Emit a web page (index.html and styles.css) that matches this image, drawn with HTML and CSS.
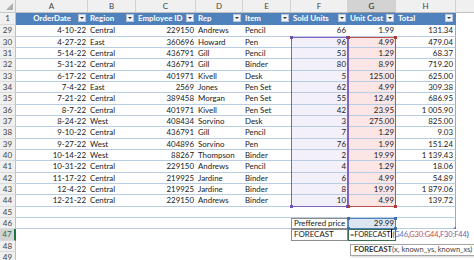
FILE: index.html
```html
<!DOCTYPE html>
<html>
<head>
<meta charset="utf-8">
<link rel="stylesheet" href="styles.css">
</head>
<body>
<div class="wrap">
  <div class="sheet">
    <div class="r">
      <div class="corner"><span class="tri"></span></div>
      <div class="colh">A</div><div class="colh">B</div><div class="colh">C</div><div class="colh">D</div>
      <div class="colh">E</div><div class="colh">F</div><div class="colh act">G</div><div class="colh">H</div><div class="colh last"></div>
    </div>
    <div class="r">
      <div class="rowh">1</div>
      <div class="th thr"><span>OrderDate</span><span class="fb"><i></i></span></div>
      <div class="th"><span>Region</span><span class="fb"><i></i></span></div>
      <div class="th"><span>Employee ID</span><span class="fb"><i></i></span></div>
      <div class="th"><span>Rep</span><span class="fb"><i></i></span></div>
      <div class="th"><span>Item</span><span class="fb"><i></i></span></div>
      <div class="th"><span>Sold Units</span><span class="fb"><i></i></span></div>
      <div class="th"><span>Unit Cost</span><span class="fb"><i></i></span></div>
      <div class="th thh"><span>Total</span><span class="fb"><i></i></span></div>
      <div class="c"></div>
    </div>
    <div class="r"><div class="rowh">29</div><div class="c t n">4-10-22</div><div class="c t">Central</div><div class="c t n">229150</div><div class="c t">Andrews</div><div class="c t">Pencil</div><div class="c t n">66</div><div class="c t n">1.99</div><div class="c t n h">131.34</div><div class="c"></div></div>
    <div class="r"><div class="rowh">30</div><div class="c t n">4-27-22</div><div class="c t">East</div><div class="c t n">360696</div><div class="c t">Howard</div><div class="c t">Pen</div><div class="c t n pf">96</div><div class="c t n pg">4.99</div><div class="c t n h">479.04</div><div class="c"></div></div>
    <div class="r"><div class="rowh">31</div><div class="c t n">5-14-22</div><div class="c t">Central</div><div class="c t n">436791</div><div class="c t">Gill</div><div class="c t">Pencil</div><div class="c t n pf">53</div><div class="c t n pg">1.29</div><div class="c t n h">68.37</div><div class="c"></div></div>
    <div class="r"><div class="rowh">32</div><div class="c t n">5-31-22</div><div class="c t">Central</div><div class="c t n">436791</div><div class="c t">Gill</div><div class="c t">Binder</div><div class="c t n pf">80</div><div class="c t n pg">8.99</div><div class="c t n h">719.20</div><div class="c"></div></div>
    <div class="r"><div class="rowh">33</div><div class="c t n">6-17-22</div><div class="c t">Central</div><div class="c t n">401971</div><div class="c t">Kivell</div><div class="c t">Desk</div><div class="c t n pf">5</div><div class="c t n pg">125.00</div><div class="c t n h">625.00</div><div class="c"></div></div>
    <div class="r"><div class="rowh">34</div><div class="c t n">7-4-22</div><div class="c t">East</div><div class="c t n">2569</div><div class="c t">Jones</div><div class="c t">Pen Set</div><div class="c t n pf">62</div><div class="c t n pg">4.99</div><div class="c t n h">309.38</div><div class="c"></div></div>
    <div class="r"><div class="rowh">35</div><div class="c t n">7-21-22</div><div class="c t">Central</div><div class="c t n">389458</div><div class="c t">Morgan</div><div class="c t">Pen Set</div><div class="c t n pf">55</div><div class="c t n pg">12.49</div><div class="c t n h">686.95</div><div class="c"></div></div>
    <div class="r"><div class="rowh">36</div><div class="c t n">8-7-22</div><div class="c t">Central</div><div class="c t n">401971</div><div class="c t">Kivell</div><div class="c t">Pen Set</div><div class="c t n pf">42</div><div class="c t n pg">23.95</div><div class="c t n h">1 005.90</div><div class="c"></div></div>
    <div class="r"><div class="rowh">37</div><div class="c t n">8-24-22</div><div class="c t">West</div><div class="c t n">408434</div><div class="c t">Sorvino</div><div class="c t">Desk</div><div class="c t n pf">3</div><div class="c t n pg">275.00</div><div class="c t n h">825.00</div><div class="c"></div></div>
    <div class="r"><div class="rowh">38</div><div class="c t n">9-10-22</div><div class="c t">Central</div><div class="c t n">436791</div><div class="c t">Gill</div><div class="c t">Pencil</div><div class="c t n pf">7</div><div class="c t n pg">1.29</div><div class="c t n h">9.03</div><div class="c"></div></div>
    <div class="r"><div class="rowh">39</div><div class="c t n">9-27-22</div><div class="c t">West</div><div class="c t n">404896</div><div class="c t">Sorvino</div><div class="c t">Pen</div><div class="c t n pf">76</div><div class="c t n pg">1.99</div><div class="c t n h">151.24</div><div class="c"></div></div>
    <div class="r"><div class="rowh">40</div><div class="c t n">10-14-22</div><div class="c t">West</div><div class="c t n">88267</div><div class="c t">Thompson</div><div class="c t">Binder</div><div class="c t n pf">2</div><div class="c t n pg">19.99</div><div class="c t n h">1 139.43</div><div class="c"></div></div>
    <div class="r"><div class="rowh">41</div><div class="c t n">10-31-22</div><div class="c t">Central</div><div class="c t n">229150</div><div class="c t">Andrews</div><div class="c t">Pencil</div><div class="c t n pf">4</div><div class="c t n pg">1.29</div><div class="c t n h">18.06</div><div class="c"></div></div>
    <div class="r"><div class="rowh">42</div><div class="c t n">11-17-22</div><div class="c t">Central</div><div class="c t n">219925</div><div class="c t">Jardine</div><div class="c t">Binder</div><div class="c t n pf">6</div><div class="c t n pg">4.99</div><div class="c t n h">54.89</div><div class="c"></div></div>
    <div class="r"><div class="rowh">43</div><div class="c t n">12-4-22</div><div class="c t">Central</div><div class="c t n">219925</div><div class="c t">Jardine</div><div class="c t">Binder</div><div class="c t n pf">8</div><div class="c t n pg">19.99</div><div class="c t n h">1 879.06</div><div class="c"></div></div>
    <div class="r"><div class="rowh">44</div><div class="c t n">12-21-22</div><div class="c t">Central</div><div class="c t n">229150</div><div class="c t">Andrews</div><div class="c t">Binder</div><div class="c t n pf">10</div><div class="c t n pg">4.99</div><div class="c t n h">139.72</div><div class="c"></div></div>
    <div class="r"><div class="rowh">45</div><div class="c t"></div><div class="c t"></div><div class="c t"></div><div class="c t"></div><div class="c t"></div><div class="c t"></div><div class="c t"></div><div class="c t h"></div><div class="c"></div></div>
    <div class="r"><div class="rowh">46</div><div class="c t"></div><div class="c t"></div><div class="c t"></div><div class="c t"></div><div class="c t"></div><div class="c t bx">Preffered price</div><div class="c t n pb">29.99</div><div class="c t h"></div><div class="c"></div></div>
    <div class="r"><div class="rowh act">47</div><div class="c"></div><div class="c"></div><div class="c"></div><div class="c"></div><div class="c"></div><div class="c bx">FORECAST</div><div class="c fx">=FORECAST<span class="cur"></span>(<span class="rb">G46</span>,<span class="rr">G30:G44</span>,<span class="rp">F30:F44</span>)</div><div class="c"></div><div class="c"></div></div>
    <div class="r"><div class="rowh">48</div><div class="c"></div><div class="c"></div><div class="c"></div><div class="c"></div><div class="c"></div><div class="c"></div><div class="c"></div><div class="c"></div><div class="c"></div></div>
    <div class="r"><div class="rowh">49</div><div class="c"></div><div class="c"></div><div class="c"></div><div class="c"></div><div class="c"></div><div class="c"></div><div class="c"></div><div class="c"></div><div class="c"></div></div>
  </div>
  <div class="over">
    <div class="rng rng-f"><i class="k tl"></i><i class="k tr"></i><i class="k bl"></i><i class="k br"></i></div>
    <div class="rng rng-g"><i class="k tl"></i><i class="k tr"></i><i class="k bl"></i><i class="k br"></i></div>
    <div class="rng rng-b"><i class="k tl"></i><i class="k tr"></i><i class="k bl"></i><i class="k br"></i></div>
    <div class="active"></div>
    <div class="resize"></div>
    <div class="tip"><b>FORECAST</b>(x, known_ys, known_xs)</div>
  </div>
</div>
</body>
</html>
```
FILE: styles.css
```css
* { box-sizing: border-box; }
body {
  margin: 0;
  width: 474px;
  height: 260px;
  overflow: hidden;
  background: #fff;
  font-family: Lato, "Liberation Sans", sans-serif;
  font-size: 7.9px;
  color: #1a1a1a;
}
.wrap { display: grid; }
.sheet, .over {
  grid-area: 1 / 1;
  display: grid;
  grid-template-columns: 16px 72px 48px 60px 47px 48px 57px 48px 60px 18px;
  grid-template-rows: 12.7px 12.6px repeat(20, 11.33px);
}
.over { pointer-events: none; }
.r { display: contents; }

.corner {
  background: #f0f0f0;
  border-right: 1px solid #c8c8c8;
  border-bottom: 1px solid #c8c8c8;
  display: flex;
  justify-content: flex-end;
  align-items: flex-end;
  padding: 0 2px 2px 0;
}
.tri {
  width: 0; height: 0;
  border-left: 7px solid transparent;
  border-bottom: 7px solid #a9b3a9;
}
.colh {
  background: #f0f0f0;
  border-right: 1px solid #d2d2d2;
  border-bottom: 1px solid #c0c0c0;
  text-align: center;
  color: #444;
  font-size: 8px;
  line-height: 12px;
}
.colh.act { background: #d3d3d3; color: #222; border-bottom: 1px solid #9a9a9a; }
.colh.last { border-right: none; }
.rowh {
  background: #f0f0f0;
  border-right: 1px solid #c0c0c0;
  border-bottom: 1px solid #dadada;
  text-align: center;
  color: #444;
  font-size: 8px;
  line-height: 11px;
}
.rowh.act { background: #d3d3d3; color: #217346; border-right: 2px solid #217346; }

.th {
  background: #4f81bd;
  color: #fff;
  font-weight: bold;
  display: flex;
  align-items: center;
  justify-content: space-between;
  padding: 0 2px 0 2px;
  white-space: nowrap;
  overflow: hidden;
  border-bottom: 1px solid #4f81bd;
}
.thr span:first-child { margin-left: auto; margin-right: 7px; }
.thh { border-right: 1px solid #4f81bd; }
.fb {
  flex: none;
  width: 8px;
  height: 8px;
  background: #f1f3f7;
  border: 1px solid #b7c3d6;
  display: flex;
  align-items: center;
  justify-content: center;
}
.fb i {
  width: 0; height: 0;
  border-left: 2px solid transparent;
  border-right: 2px solid transparent;
  border-top: 2px solid #333;
}

.c {
  white-space: nowrap;
  padding: 0 2px;
  line-height: 10.5px;
}
.n { text-align: right; }
.t { border-bottom: 1px solid #b8cce4; }
.h { border-right: 1px solid #8eaadb; }
.pf { background: #f3f0fa; }
.pg { background: #fbe5e5; }
.pb { background: #dce6f1; }
.bx { box-shadow: inset 0 0 0 1px #8c8c8c; border-bottom: none; padding-left: 3px; }
.fx { position: relative; z-index: 2; padding-left: 2px; font-size: 7.4px; letter-spacing: -0.1px; }
.cur { display: inline-block; width: 1px; height: 9px; background: #000; vertical-align: -1px; margin: 0 0.5px; }
.rb { color: #4a78c0; }
.rr { color: #c0504d; }
.rp { color: #7d5aa8; }

.rng { position: relative; }
.rng-f { grid-column: 7; grid-row: 4 / 19; border: 1px solid #8064c0; }
.rng-g { grid-column: 8; grid-row: 4 / 19; border: 1px solid #c0504d; border-left-color: #8064c0; }
.rng-b { grid-column: 8; grid-row: 20; border: 1px solid #4f81bd; }
.k { position: absolute; width: 3px; height: 3px; }
.rng-f .k { background: #7052b0; }
.rng-g .k { background: #b03a37; }
.rng-b .k { background: #3f6fb0; }
.tl { left: -2px; top: -2px; }
.tr { right: -2px; top: -2px; }
.bl { left: -2px; bottom: -2px; }
.br { right: -2px; bottom: -2px; }
.active { grid-column: 8; grid-row: 21; border: 1px solid #3d6b50; }
.resize {
  grid-column: 9; grid-row: 20;
  justify-self: end; align-self: end;
  width: 0; height: 0;
  border-left: 3px solid transparent;
  border-bottom: 3px solid #4f81bd;
}
.tip {
  grid-column: 8 / 11;
  grid-row: 22 / 24;
  align-self: start;
  justify-self: start;
  margin: 3px 0 0 2px;
  background: #fff;
  border: 1px solid #a6a6a6;
  box-shadow: 1px 1px 2px rgba(0,0,0,0.18);
  color: #444;
  font-size: 7.5px;
  line-height: 10px;
  padding: 0 3px;
  white-space: nowrap;
}
.tip b { color: #333; }
```
